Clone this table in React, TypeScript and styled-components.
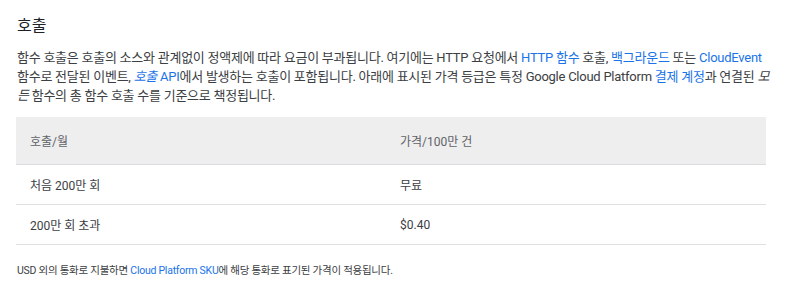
import styled, { createGlobalStyle } from "styled-components";

const GlobalStyle = createGlobalStyle`
  html, body {
    margin: 0;
    padding: 0;
    background: #fff;
  }
  body {
    font-family: Roboto, "Noto Sans CJK KR", "Noto Sans", sans-serif;
    color: #202124;
  }
`;

const Page = styled.section`
  padding: 14px 30px 0 17px;
  width: 800px;
  box-sizing: border-box;
`;

const Title = styled.h3`
  margin: 0;
  font-size: 16px;
  font-weight: 400;
  line-height: 24px;
  color: #202124;
`;

const Text = styled.p<{ $small?: boolean }>`
  margin: ${({ $small }) => ($small ? "18px 0 0" : "10px 0 0")};
  font-size: ${({ $small }) => ($small ? "10.5px" : "13px")};
  line-height: ${({ $small }) => ($small ? "16px" : "19px")};
  letter-spacing: ${({ $small }) => ($small ? "-0.25px" : "-0.25px")};
  color: #3c4043;
`;

const Link = styled.a`
  color: #1a73e8;
  text-decoration: none;
`;

const Table = styled.table`
  margin-top: 12px;
  margin-left: -1px;
  width: 750px;
  border-collapse: collapse;
  font-size: 12px;
  color: #3c4043;
`;

const Head = styled.th`
  background: #eeeeee;
  height: 47px;
  padding: 0 14px;
  text-align: left;
  font-weight: 400;
  color: #5f6368;
  border-bottom: 1px solid #dadce0;

  &:first-child {
    width: 342px;
  }
`;

const Cell = styled.td`
  height: 39px;
  padding: 0 14px;
  border-bottom: 1px solid #e0e0e0;
`;

const ROWS = [
  ["처음 200만 회", "무료"],
  ["200만 회 초과", "$0.40"],
];

export default function App() {
  return (
    <>
      <GlobalStyle />
      <Page>
        <Title>호출</Title>
        <Text>
          함수 호출은 호출의 소스와 관계없이 정액제에 따라 요금이 부과됩니다. 여기에는 HTTP 요청에서{" "}
          <Link href="#">HTTP 함수</Link> 호출, <Link href="#">백그라운드</Link> 또는{" "}
          <Link href="#">CloudEvent</Link> 함수로 전달된 이벤트,{" "}
          <Link href="#">
            <em>호출</em> API
          </Link>
          에서 발생하는 호출이 포함됩니다. 아래에 표시된 가격 등급은 특정 Google Cloud Platform{" "}
          <Link href="#">결제 계정</Link>과 연결된 <em>모든</em> 함수의 총 함수 호출 수를 기준으로
          책정됩니다.
        </Text>
        <Table>
          <thead>
            <tr>
              <Head>호출/월</Head>
              <Head>가격/100만 건</Head>
            </tr>
          </thead>
          <tbody>
            {ROWS.map(([a, b]) => (
              <tr key={a}>
                <Cell>{a}</Cell>
                <Cell>{b}</Cell>
              </tr>
            ))}
          </tbody>
        </Table>
        <Text $small>
          USD 외의 통화로 지불하면 <Link href="#">Cloud Platform SKU</Link>에 해당 통화로 표기된 가격이
          적용됩니다.
        </Text>
      </Page>
    </>
  );
}
